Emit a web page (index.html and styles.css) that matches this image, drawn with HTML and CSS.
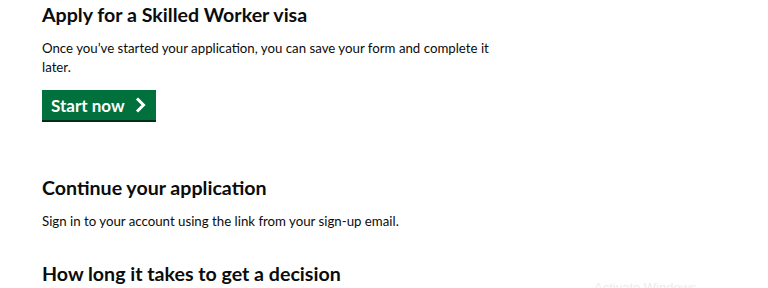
FILE: index.html
```html
<!DOCTYPE html>
<html lang="en">
<head>
<meta charset="utf-8">
<title>Apply for a Skilled Worker visa</title>
<link rel="stylesheet" href="styles.css">
</head>
<body>
<main class="content">
  <h2 class="heading">Apply for a Skilled Worker visa</h2>
  <p class="body">Once you’ve started your application, you can save your form and complete it later.</p>
  <a class="start-button" href="#">Start now
    <svg class="chevron" width="12" height="16" viewBox="0 0 12 16" aria-hidden="true"><path d="M2 1.5 L8.5 8 L2 14.5" fill="none" stroke="#fff" stroke-width="3"/></svg>
  </a>

  <h2 class="heading heading-continue">Continue your application</h2>
  <p class="body">Sign in to your account using the link from your sign-up email.</p>

  <h2 class="heading heading-how">How long it takes to get a decision</h2>
</main>
<div class="watermark">Activate Windows</div>
</body>
</html>
```

FILE: styles.css
```css
html, body {
  margin: 0;
  padding: 0;
  background: #ffffff;
  overflow: hidden;
}
body {
  width: 768px;
  height: 288px;
  font-family: Lato, "Noto Sans", "Liberation Sans", sans-serif;
  color: #0b0c0c;
  position: relative;
}
.content {
  padding: 2px 0 0 42px;
  width: 470px;
}
.heading {
  font-size: 19.6px;
  font-weight: 700;
  line-height: 26px;
  margin: 0 0 11px 0;
}
.body {
  font-size: 13.25px;
  line-height: 19px;
  margin: 0 0 13px 0;
}
.start-button {
  display: inline-flex;
  align-items: center;
  gap: 10px;
  background: #00703c;
  color: #ffffff;
  text-decoration: none;
  font-size: 17px;
  font-weight: 700;
  height: 30px;
  padding: 0 9px 0 9px;
  box-shadow: 0 2px 0 #002d18;
}
.chevron {
  display: block;
}
.heading-continue {
  margin-top: 55px;
}
.heading-how {
  margin-top: 30px;
}
.watermark {
  position: absolute;
  left: 594px;
  top: 280px;
  font-size: 13px;
  color: #ececec;
  font-family: "Liberation Sans", sans-serif;
}
```
